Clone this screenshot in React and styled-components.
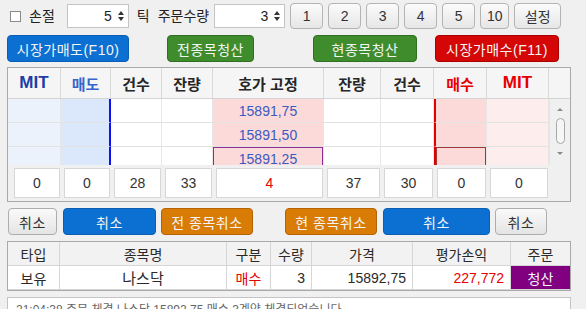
import React from "react";
import styled, { createGlobalStyle, css } from "styled-components";

const GlobalStyle = createGlobalStyle`
  html, body {
    margin: 0;
    padding: 0;
    overflow: hidden;
    background: #f0f0f0;
  }
  body {
    font-family: "Liberation Sans", "Noto Sans CJK KR", sans-serif;
    color: #222;
  }
`;

const Page = styled.div`
  width: 586px;
  height: 309px;
  box-sizing: border-box;
  padding: 3px 0 0 7px;
  display: flex;
  flex-direction: column;
`;

/* ---------- top bar ---------- */

const TopBar = styled.div`
  display: flex;
  align-items: center;
  height: 26px;
`;

const Check = styled.span`
  width: 11px;
  height: 11px;
  margin-left: 3px;
  border: 1px solid #8a8a8a;
  background: #fff;
  box-sizing: border-box;
`;

const Label = styled.span`
  font-size: 14px;
  line-height: 16px;
  margin-left: ${({ $ml }) => $ml}px;
  white-space: nowrap;
`;

const Spin = styled.div`
  display: flex;
  align-items: center;
  justify-content: flex-end;
  width: ${({ $w }) => $w}px;
  height: 24px;
  margin-left: ${({ $ml }) => $ml}px;
  box-sizing: border-box;
  border: 1px solid #c4c4c4;
  background: #fff;
  font-size: 14px;
  padding-right: 4px;
`;

const SpinArrows = styled.span`
  display: flex;
  flex-direction: column;
  gap: 2px;
  margin-left: 6px;
  &::before,
  &::after {
    content: "";
    display: block;
    border-left: 3.5px solid transparent;
    border-right: 3.5px solid transparent;
  }
  &::before {
    border-bottom: 4px solid #333;
  }
  &::after {
    border-top: 4px solid #333;
  }
`;

const NumGroup = styled.div`
  display: flex;
  gap: 5px;
  margin-left: 5px;
`;

const NumButton = styled.button`
  width: ${({ $w }) => $w || 33}px;
  height: 26px;
  padding: 0;
  border: 1px solid #b4b4b4;
  border-radius: 4px;
  background: linear-gradient(#fbfbfb, #e6e6e6);
  font-family: inherit;
  font-size: 14px;
  color: #333;
`;

/* ---------- action buttons ---------- */

const ActionRow = styled.div`
  display: flex;
  height: 27px;
  margin-top: 6px;
`;

const palette = {
  blue: ["#0b70d2", "#0a5fb4"],
  green: ["#3f8c2c", "#2f7020"],
  red: ["#d40606", "#a80000"],
  orange: ["#d97c06", "#b56300"],
  gray: ["#f2f2f2", "#ababab"],
};

const ColorButton = styled.button`
  width: ${({ $w }) => $w}px;
  margin-left: ${({ $ml }) => $ml || 0}px;
  height: 27px;
  padding: 0;
  border-radius: 4px;
  font-family: inherit;
  font-size: 14px;
  letter-spacing: 0.5px;
  white-space: nowrap;
  ${({ $c }) =>
    $c === "gray"
      ? css`
          background: linear-gradient(#fafafa, #e4e4e4);
          border: 1px solid #adadad;
          color: #333;
        `
      : css`
          background: ${palette[$c][0]};
          border: 1px solid ${palette[$c][1]};
          color: #f4f4f4;
        `}
`;

/* ---------- order book ---------- */

const cols = [53, 50, 51, 51, 111, 57, 53, 53, 62];
const gridCols = cols.map((c) => `${c}px`).join(" ");

const Book = styled.div`
  margin-top: 5px;
  width: 564px;
  box-sizing: border-box;
  border: 1px solid #a9a9a9;
  background: #f0f0f0;
`;

const BookHead = styled.div`
  display: grid;
  grid-template-columns: ${gridCols} 21px;
  height: 30px;
  border-bottom: 1px solid #d4d4d4;
  background: #f5f5f5;
`;

const HeadCell = styled.div`
  display: flex;
  align-items: center;
  justify-content: center;
  border-right: 1px solid #d9d9d9;
  font-size: ${({ $mit }) => ($mit ? 17 : 15)}px;
  font-weight: bold;
  color: ${({ $color }) => $color || "#262626"};
  &:last-child {
    border-right: none;
  }
`;

const BookBody = styled.div`
  display: flex;
  height: 66px;
  overflow: hidden;
  background: #fff;
`;

const Rows = styled.div`
  width: 541px;
`;

const BookRow = styled.div`
  display: grid;
  grid-template-columns: ${gridCols};
  height: 24px;
`;

const BookCell = styled.div`
  box-sizing: border-box;
  background: ${({ $bg }) => $bg};
  border-right: 1px solid #e6e6e6;
  border-bottom: 1px solid #e2e2e2;
  display: flex;
  align-items: center;
  justify-content: center;
  font-size: 14px;
  color: #3a5bc0;
  ${({ $lineRight }) =>
    $lineRight &&
    css`
      border-right: 2px solid ${$lineRight};
    `}
  ${({ $lineLeft }) =>
    $lineLeft &&
    css`
      border-left: 2px solid ${$lineLeft};
    `}
  ${({ $box }) =>
    $box &&
    css`
      box-shadow: inset 0 0 0 1px ${$box};
    `}
`;

const ScrollTrack = styled.div`
  width: 21px;
  background: #f0f0f0;
  border-left: 1px solid #e4e4e4;
  display: flex;
  flex-direction: column;
  align-items: center;
  padding-top: 9px;
  box-sizing: border-box;
`;

const Arrow = styled.span`
  border-left: 3.5px solid transparent;
  border-right: 3.5px solid transparent;
  ${({ $down }) =>
    $down
      ? css`
          border-top: 3.5px solid #8a8a8a;
        `
      : css`
          border-bottom: 3.5px solid #8a8a8a;
        `}
`;

const Thumb = styled.span`
  width: 7px;
  height: 24px;
  margin: 7px 0 8px;
  border: 1px solid #a8a8a8;
  border-radius: 5px;
  background: #f6f6f6;
`;

const Summary = styled.div`
  display: grid;
  grid-template-columns: ${gridCols};
  padding: 3px 0 3px;
`;

const SumCell = styled.div`
  height: 30px;
  box-sizing: border-box;
  margin: 0 1px 0 ${({ $first }) => ($first ? 6 : 3)}px;
  background: #fff;
  border: 1px solid #d7d7d7;
  display: flex;
  align-items: center;
  justify-content: center;
  font-size: 14px;
  color: ${({ $red }) => ($red ? "#e00000" : "#333")};
`;

/* ---------- cancel row ---------- */

const CancelRow = styled.div`
  display: flex;
  margin-top: 6px;
  height: 27px;
`;

/* ---------- position table ---------- */

const posCols = "52px 167px 44px 41px 101px 98px 59px";

const PosTable = styled.div`
  margin-top: 6px;
  width: 564px;
  height: 58px;
  box-sizing: border-box;
  border: 1px solid #a9a9a9;
  background: #fff;
`;

const PosRow = styled.div`
  display: grid;
  grid-template-columns: ${posCols};
  height: ${({ $head }) => ($head ? 23 : 23)}px;
  background: ${({ $head }) => ($head ? "#f2f2f2" : "#fff")};
  border-bottom: 1px solid #d6d6d6;
`;

const PosCell = styled.div`
  display: flex;
  align-items: center;
  justify-content: ${({ $align }) => $align || "center"};
  padding: 0 ${({ $align }) => ($align === "flex-end" ? 6 : 0)}px 0 0;
  border-right: 1px solid #d6d6d6;
  font-size: ${({ $big }) => ($big ? 15 : 14)}px;
  color: ${({ $color }) => $color || "#2a2a2a"};
  background: ${({ $bg }) => $bg || "transparent"};
  &:last-child {
    border-right: none;
  }
`;

const StatusBox = styled.div`
  margin-top: 6px;
  width: 564px;
  height: 30px;
  box-sizing: border-box;
  border: 1px solid #c4c4c4;
  background: #fff;
  padding: 2px 8px;
  font-size: 12px;
  color: #666;
  white-space: nowrap;
`;

const sideColors = [
  "#ecf2fb",
  "#dbe8fb",
  "#fff",
  "#fff",
  "#fddada",
  "#fff",
  "#fff",
  "#fddada",
  "#fdeded",
];

const prices = ["15891,75", "15891,50", "15891,25"];

const App = () => {
  return (
    <>
      <GlobalStyle />
      <Page>
        <TopBar>
          <Check />
          <Label $ml={8}>손절</Label>
          <Spin $w={62} $ml={12}>
            5<SpinArrows />
          </Spin>
          <Label $ml={8}>틱</Label>
          <Label $ml={8}>주문수량</Label>
          <Spin $w={71} $ml={5}>
            3<SpinArrows />
          </Spin>
          <NumGroup>
            {["1", "2", "3", "4", "5"].map((n) => (
              <NumButton key={n}>{n}</NumButton>
            ))}
            <NumButton $w={29}>10</NumButton>
            <NumButton $w={47}>설정</NumButton>
          </NumGroup>
        </TopBar>

        <ActionRow>
          <ColorButton $c="blue" $w={122}>
            시장가매도(F10)
          </ColorButton>
          <ColorButton $c="green" $w={87} $ml={38}>
            전종목청산
          </ColorButton>
          <ColorButton $c="green" $w={104} $ml={59}>
            현종목청산
          </ColorButton>
          <ColorButton $c="red" $w={124} $ml={18}>
            시장가매수(F11)
          </ColorButton>
        </ActionRow>

        <Book>
          <BookHead>
            <HeadCell $mit $color="#1c3ea6">MIT</HeadCell>
            <HeadCell $color="#3565cc">매도</HeadCell>
            <HeadCell>건수</HeadCell>
            <HeadCell>잔량</HeadCell>
            <HeadCell>호가 고정</HeadCell>
            <HeadCell>잔량</HeadCell>
            <HeadCell>건수</HeadCell>
            <HeadCell $color="#e60000">매수</HeadCell>
            <HeadCell $mit $color="#e60000">MIT</HeadCell>
            <HeadCell />
          </BookHead>
          <BookBody>
            <Rows>
              {prices.map((p, r) => (
                <BookRow key={p}>
                  {sideColors.map((bg, i) => (
                    <BookCell
                      key={i}
                      $bg={bg}
                      $lineRight={i === 1 ? "#1010f0" : null}
                      $lineLeft={i === 7 ? "#e00000" : null}
                      $box={
                        r === 2 && i === 4
                          ? "#8e2b94"
                          : r === 2 && i === 7
                          ? "#a83232"
                          : null
                      }
                    >
                      {i === 4 ? p : ""}
                    </BookCell>
                  ))}
                </BookRow>
              ))}
            </Rows>
            <ScrollTrack>
              <Arrow />
              <Thumb />
              <Arrow $down />
            </ScrollTrack>
          </BookBody>
          <Summary>
            {["0", "0", "28", "33", "4", "37", "30", "0", "0"].map((v, i) => (
              <SumCell key={i} $first={i === 0} $red={i === 4}>
                {v}
              </SumCell>
            ))}
          </Summary>
        </Book>

        <CancelRow>
          <ColorButton $c="gray" $w={49} $ml={1}>
            취소
          </ColorButton>
          <ColorButton $c="blue" $w={93} $ml={6}>
            취소
          </ColorButton>
          <ColorButton $c="orange" $w={92} $ml={5}>
            전 종목취소
          </ColorButton>
          <ColorButton $c="orange" $w={92} $ml={32}>
            현 종목취소
          </ColorButton>
          <ColorButton $c="blue" $w={107} $ml={6}>
            취소
          </ColorButton>
          <ColorButton $c="gray" $w={52} $ml={5}>
            취소
          </ColorButton>
        </CancelRow>

        <PosTable>
          <PosRow $head>
            <PosCell>타입</PosCell>
            <PosCell>종목명</PosCell>
            <PosCell>구분</PosCell>
            <PosCell>수량</PosCell>
            <PosCell>가격</PosCell>
            <PosCell>평가손익</PosCell>
            <PosCell>주문</PosCell>
          </PosRow>
          <PosRow>
            <PosCell>보유</PosCell>
            <PosCell $big>나스닥</PosCell>
            <PosCell $color="#e00000">매수</PosCell>
            <PosCell $align="flex-end">3</PosCell>
            <PosCell $align="flex-end">15892,75</PosCell>
            <PosCell $align="flex-end" $color="#e60000">
              227,772
            </PosCell>
            <PosCell $bg="#800080" $color="#f4f4f4">
              청산
            </PosCell>
          </PosRow>
        </PosTable>

        <StatusBox>
          21:04:38 주문 체결 나스닥 15892.75 매수 3계약 체결되었습니다
        </StatusBox>
      </Page>
    </>
  );
};

export default App;
